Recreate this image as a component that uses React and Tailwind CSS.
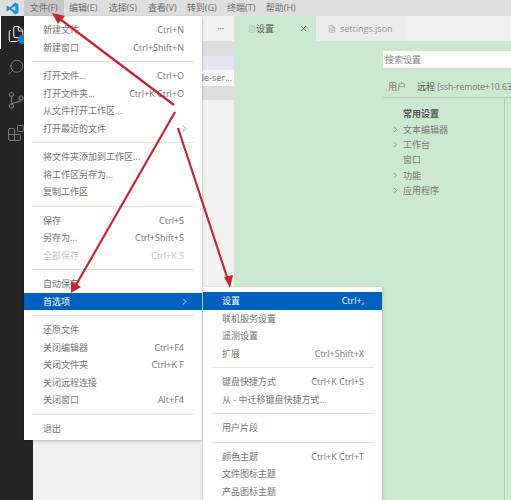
import React from "react";
import { Search, Blocks, Files, ChevronRight, X, FileText } from "lucide-react";

const menuBar = ["文件(F)", "编辑(E)", "选择(S)", "查看(V)", "转到(G)", "终端(T)", "帮助(H)"];

const fileMenu = [
  [["新建文件", "Ctrl+N"], ["新建窗口", "Ctrl+Shift+N"]],
  [["打开文件...", "Ctrl+O"], ["打开文件夹...", "Ctrl+K Ctrl+O"], ["从文件打开工作区..."], ["打开最近的文件", "", "arrow"]],
  [["将文件夹添加到工作区..."], ["将工作区另存为..."], ["复制工作区"]],
  [["保存", "Ctrl+S"], ["另存为...", "Ctrl+Shift+S"], ["全部保存", "Ctrl+K S", "disabled"]],
  [["自动保存"], ["首选项", "", "active"]],
  [["还原文件"], ["关闭编辑器", "Ctrl+F4"], ["关闭文件夹", "Ctrl+K F"], ["关闭远程连接"], ["关闭窗口", "Alt+F4"]],
  [["退出"]],
];

const prefsMenu = [
  [["设置", "Ctrl+,", "active"], ["联机服务设置"], ["遥测设置"], ["扩展", "Ctrl+Shift+X"]],
  [["键盘快捷方式", "Ctrl+K Ctrl+S"], ["从 - 中迁移键盘快捷方式..."]],
  [["用户片段"]],
  [["颜色主题", "Ctrl+K Ctrl+T"], ["文件图标主题"], ["产品图标主题"]],
];

const tocItems = [
  ["文本编辑器", true],
  ["工作台", true],
  ["窗口", false],
  ["功能", true],
  ["应用程序", true],
];

const MenuRow = ({ label, shortcut, state, left }) => {
  const rowClass =
    state === "active"
      ? "bg-[#0060c0] text-white"
      : state === "disabled"
        ? "text-[#c8c8c8]"
        : "text-[#757575]";
  return (
    <div className={`flex h-[17.5px] items-center justify-between pr-[18px] ${left} ${rowClass}`}>
      <span>{label}</span>
      {shortcut && <span>{shortcut}</span>}
      {(state === "arrow" || (state === "active" && !shortcut)) && (
        <ChevronRight size={11} strokeWidth={1.5} className="-mr-[6px]" />
      )}
    </div>
  );
};

const Menu = ({ groups, className, left, line }) => (
  <div className={`absolute z-10 bg-white shadow-[0_1px_3px_rgba(0,0,0,0.25)] ${className}`}>
    {groups.map((rows, i) => (
      <div key={i}>
        {i > 0 && (
          <div className="flex h-[11px] items-center">
            <div className={`h-px bg-[#e6e3df] ${line}`} />
          </div>
        )}
        {rows.map(([label, shortcut, state]) => (
          <MenuRow key={label} label={label} shortcut={shortcut} state={state} left={left} />
        ))}
      </div>
    ))}
  </div>
);

const Arrows = () => (
  <svg className="absolute left-0 top-0 z-20" width="511" height="500" fill="none">
    <g stroke="#c62530" strokeWidth="2.2">
      <path d="M174 105 L60 19" />
      <path d="M175 112 L76 285" />
      <path d="M178 128 L228 280" />
    </g>
    <g fill="#c62530">
      <path d="M52 13 L65 16 L58 24 Z" />
      <path d="M71 293 L71 281 L81 287 Z" />
      <path d="M230 288 L224 277 L233 275 Z" />
    </g>
  </svg>
);

const GitIcon = () => (
  <svg width="18" height="18" viewBox="0 0 18 18" fill="none" stroke="currentColor" strokeWidth="1.2">
    <circle cx="4.5" cy="3.5" r="2" />
    <circle cx="4.5" cy="15" r="2" />
    <circle cx="14" cy="7" r="2" />
    <path d="M4.5 5.5 V13 M14 9 C14 11.5 7 10.5 4.5 13" />
  </svg>
);

const App = () => {
  return (
    <div className="relative flex h-[500px] w-[511px] flex-col overflow-hidden bg-[#f1f1f1] font-['Open_Sans','Noto_Sans_CJK_SC',sans-serif] text-[9px]">
      <div className="flex h-4 shrink-0 items-center bg-[#dedede] text-[#6b6b6b]">
        <div className="flex w-6 justify-center">
          <svg width="13" height="13" viewBox="0 0 24 24">
            <path d="M17 1 L23 4 V20 L17 23 L7 14 L3 17 L1 16 V8 L3 7 L7 10 Z" fill="#1f8fdc" />
            <path d="M17 7 L10 12 L17 17 Z" fill="#dedede" />
          </svg>
        </div>
        {menuBar.map((item, i) => (
          <div
            key={item}
            className={`flex h-4 w-[39.5px] items-center justify-center ${i === 0 ? "bg-[#c8c8c8]" : ""}`}
          >
            {item}
          </div>
        ))}
      </div>

      <div className="flex min-h-0 flex-1">
        <div className="relative flex w-[33px] shrink-0 flex-col items-end gap-[15px] border-l border-l-white bg-[#252526] pr-[8px] pt-[9px] text-[#7d7d7d] [border-image:linear-gradient(white_34px,#252526_34px)_1]">
          <div className="relative">
            <Files size={18} strokeWidth={1.3} className="text-white" />
            <div className="absolute -bottom-[1px] -right-[2px] h-[9px] w-[9px] rounded-full bg-[#1b80d0]" />
          </div>
          <Search size={18} strokeWidth={1.3} className="-scale-x-100" />
          <GitIcon />
          <Blocks size={18} strokeWidth={1.3} />
        </div>

        <div className="flex w-[201px] shrink-0 flex-col bg-[#f1f1f1]">
          <div className="flex h-[25px] items-center justify-end pr-[10px] text-[#666]">···</div>
          <div className="h-[15px] bg-[#dedede]" />
          <div className="h-[14px] bg-[#e6e6f5]" />
          <div className="flex h-[16px] items-center justify-end bg-[#f8f8f8] pr-[2px] text-[#777]">de-ser...</div>
          <div className="h-[14px] bg-[#dedede]" />
        </div>

        <div className="flex min-w-0 flex-1 flex-col bg-[#cde8d0]">
          <div className="flex h-[25px] shrink-0 bg-[#f1f1f1]">
            <div className="flex w-[82px] items-center justify-between bg-[#cde8d0] pl-[14px] pr-2 text-[#555]">
              <span className="flex items-center">
                <FileText size={8} className="text-[#a9c4ad]" />
                设置
              </span>
              <X size={9} />
            </div>
            <div className="flex w-[90px] items-center gap-1 bg-[#ececec] pl-[12px] text-[#999]">
              <FileText size={8} />
              <span>settings.json</span>
            </div>
          </div>
          <div className="flex min-h-0 flex-1 flex-col pl-[149px]">
            <div className="mt-[10px] flex h-[17px] shrink-0 items-center bg-white pl-[2px] text-[#888]">搜索设置</div>
            <div className="mt-[9px] flex h-[21px] shrink-0 items-center gap-[11px] whitespace-nowrap border-b border-[#b5cdb8] pl-[5px] text-[#777]">
              <span>用户</span>
              <span className="text-[8.5px]">
                <span className="text-[9px] text-[#555]">远程</span> [ssh-remote+10.63
              </span>
            </div>
            <div className="flex min-h-0 flex-1">
              <div className="w-[121px] shrink-0 pt-[9px] text-[#777]">
                <div className="h-[15.2px] pl-5 font-bold text-[#555]">常用设置</div>
                {tocItems.map(([label, hasChildren]) => (
                  <div key={label} className="flex h-[15.2px] items-center">
                    <div className="flex w-5 justify-center pl-1">
                      {hasChildren && <ChevronRight size={9} />}
                    </div>
                    <span>{label}</span>
                  </div>
                ))}
              </div>
              <div className="w-px bg-[#b5cdb8]" />
            </div>
          </div>
        </div>
      </div>

      <Menu
        groups={fileMenu}
        className="left-6 top-4 w-[178px] pb-[3px] pt-[5px]"
        left="pl-[19px]"
        line="mx-2 w-[162px]"
      />
      <Menu
        groups={prefsMenu}
        className="left-[203px] top-[287px] h-[220px] w-[179px] pt-[5px]"
        left="pl-[19px]"
        line="ml-[9px] w-[162px]"
      />
      <Arrows />
    </div>
  );
};

export default App;
